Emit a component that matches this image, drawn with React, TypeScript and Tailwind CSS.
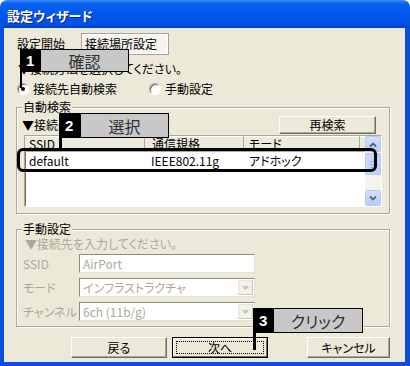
import React from 'react'

function Radio({ checked }: { checked?: boolean }) {
  return (
    <span className="w-[12px] h-[12px] rounded-full bg-white border border-[#ACA899] border-r-white border-b-white shadow-[inset_1px_1px_0_#716F64,1px_1px_0_#F1EFE2] flex items-center justify-center">
      {checked ? <span className="w-[4px] h-[4px] rounded-full bg-black" /> : null}
    </span>
  )
}

function Chevron({ up }: { up?: boolean }) {
  return (
    <svg width="8" height="5" viewBox="0 0 8 5">
      <path d={up ? 'M1 4.5 L4 1.5 L7 4.5' : 'M1 0.5 L4 3.5 L7 0.5'} fill="none" stroke="#4D6185" strokeWidth="1.8" />
    </svg>
  )
}

function Combo({ label, value }: { label: string; value: string }) {
  return (
    <div className="flex items-center h-[19px] mt-[5px]">
      <span className="w-[62px] pl-[6px] text-[#ACA899]">{label}</span>
      <div className="w-[176px] h-full bg-white border border-[#8D8B7F] border-r-[#E4E2D6] border-b-[#E4E2D6] flex items-center">
        <span className="flex-1 pl-[3px] text-[#ACA899]">{value}</span>
        <span className="w-[15px] h-[15px] mr-[1px] bg-[#F2F1EA] border border-[#E6E4D9] border-r-[#C9C7BA] border-b-[#C9C7BA] flex items-center justify-center">
          <svg width="7" height="4" viewBox="0 0 7 4">
            <path d="M0 0 L7 0 L3.5 4 Z" fill="#C4C2B8" />
          </svg>
        </span>
      </div>
    </div>
  )
}

export default function App() {
  return (
    <div className="relative w-[410px] h-[366px] flex flex-col bg-white font-['Noto_Sans_CJK_JP',sans-serif] text-[12px] leading-[14px] text-black [font-feature-settings:'palt']">
      {/* title bar */}
      <div className="h-[28px] shrink-0 rounded-t-[7px] bg-[linear-gradient(180deg,#3D8EF7_0%,#0A62EF_12%,#0058EE_45%,#0052E6_85%,#003FC6_100%)] flex items-center pl-[7px] pt-[3px] text-white font-bold text-[13px] [text-shadow:1px_1px_0_#0A1E8A]">
        設定ウィザード
      </div>

      <div className="flex-1 flex flex-col bg-[#ECE9D8] border-l-4 border-r-[5px] border-b-4 border-[#0B4DE0]">
        {/* steps */}
        <div className="mt-[5px] h-[22px] flex">
          <div className="w-[77px] pl-[13px] flex items-center">設定開始</div>
          <div className="w-[88px] border border-[#A5A39A] bg-white p-[1px]">
            <div className="h-full bg-[#F4F3EE] pl-[2px] flex items-center">接続場所設定</div>
          </div>
        </div>

        <div className="mt-[7px] h-[14px] pl-[14px]">▼接続方法を選択してください。</div>

        <div className="mt-[6px] h-[14px] flex items-center">
          <span className="ml-[13px]"><Radio checked /></span>
          <span className="ml-[4px] w-[104px]">接続先自動検索</span>
          <span className="ml-[12px]"><Radio /></span>
          <span className="ml-[4px]">手動設定</span>
        </div>

        {/* auto search group */}
        <div className="relative mt-[11px] ml-[12px] w-[374px] h-[107px] border border-[#ACA899] shadow-[inset_1px_1px_0_#fff,1px_1px_0_#fff] flex flex-col">
          <span className="absolute -top-[8px] left-[5px] px-[1px] bg-[#ECE9D8]">自動検索</span>
          <div className="mt-[7px] h-[19px] flex items-center justify-between">
            <span className="pl-[5px]">▼接続先を選択します。</span>
            <div className="mr-[13px] w-[97px] h-[18px] bg-[#ECE9D8] border border-white border-r-[#716F64] border-b-[#716F64] shadow-[inset_-1px_-1px_0_#ACA899] flex items-center justify-center">
              再検索
            </div>
          </div>
          <div className="ml-[7px] mt-[1px] w-[358px] h-[72px] bg-white border border-[#ACA899] border-r-white border-b-white shadow-[inset_1px_1px_0_#716F64] flex">
            <div className="flex-1 flex flex-col">
              <div className="h-[16px] flex bg-[#EBEADB] border-b border-[#ACA899] shadow-[inset_0_1px_0_#fff]">
                <div className="w-[120px] pl-[4px] border-r border-[#ACA899] flex items-center">SSID</div>
                <div className="w-[99px] pl-[7px] border-r border-[#ACA899] flex items-center">通信規格</div>
                <div className="w-[116px] pl-[5px] border-r border-[#ACA899] flex items-center">モード</div>
              </div>
              <div className="h-[17px] flex items-center">
                <span className="w-[120px] pl-[4px]">default</span>
                <span className="w-[99px] pl-[6px]">IEEE802.11g</span>
                <span className="pl-[5px]">アドホック</span>
              </div>
            </div>
            <div className="w-[16px] flex flex-col bg-[#F4F3EE]">
              <div className="h-[16px] rounded-[2px] border border-[#B7C9F5] bg-[linear-gradient(180deg,#D4E1FD,#B6CBF8)] flex items-center justify-center">
                <Chevron up />
              </div>
              <div className="mt-[1px] h-[22px] rounded-[2px] border border-[#B7C9F5] bg-[linear-gradient(90deg,#CDDCFC,#B8CDF9)] flex flex-col items-center justify-center gap-[2px]">
                <span className="w-[6px] h-[1px] bg-[#8CB0F8]" />
                <span className="w-[6px] h-[1px] bg-[#8CB0F8]" />
                <span className="w-[6px] h-[1px] bg-[#8CB0F8]" />
              </div>
              <div className="flex-1" />
              <div className="h-[16px] rounded-[2px] border border-[#B7C9F5] bg-[linear-gradient(180deg,#D4E1FD,#B6CBF8)] flex items-center justify-center">
                <Chevron />
              </div>
            </div>
          </div>
        </div>

        {/* manual group */}
        <div className="relative mt-[15px] ml-[12px] w-[374px] h-[98px] border border-[#ACA899] shadow-[inset_1px_1px_0_#fff,1px_1px_0_#fff] flex flex-col">
          <span className="absolute -top-[8px] left-[5px] px-[1px] bg-[#ECE9D8]">手動設定</span>
          <div className="mt-[7px] h-[14px] pl-[8px] text-[#ACA899]">▼接続先を入力してください。</div>
          <div className="flex items-center h-[19px] mt-[3px]">
            <span className="w-[62px] pl-[6px] text-[#ACA899]">SSID</span>
            <div className="w-[176px] h-full bg-white border border-[#8D8B7F] border-r-[#E4E2D6] border-b-[#E4E2D6] flex items-center pl-[3px] text-[#ACA899]">
              AirPort
            </div>
          </div>
          <Combo label="モード" value="インフラストラクチャ" />
          <Combo label="チャンネル" value="6ch (11b/g)" />
        </div>

        {/* buttons */}
        <div className="mt-[10px] h-[21px] flex">
          <div className="ml-[67px] w-[96px] h-full bg-[#ECE9D8] border border-white border-r-[#716F64] border-b-[#716F64] shadow-[inset_-1px_-1px_0_#ACA899] flex items-center justify-center">
            戻る
          </div>
          <div className="ml-[5px] w-[96px] h-full border border-black">
            <div className="h-full border border-white border-r-[#716F64] border-b-[#716F64] p-[2px]">
              <div className="h-full border border-dotted border-black flex items-center justify-center">次へ</div>
            </div>
          </div>
          <div className="ml-[39px] w-[83px] h-full bg-[#ECE9D8] border border-white border-r-[#716F64] border-b-[#716F64] shadow-[inset_-1px_-1px_0_#ACA899] flex items-center justify-center">
            キャンセル
          </div>
        </div>
      </div>

      {/* highlight around selected row */}
      <div className="absolute left-[17px] top-[148px] w-[360px] h-[24px] border-[3px] border-black rounded-[6px]" />

      {/* callout 1 */}
      <div className="absolute left-[20px] top-[49px] h-[23px] flex">
        <div className="w-[20px] bg-black text-white font-bold text-[15px] font-['Liberation_Sans',sans-serif] pl-[6px] flex items-center">1</div>
        <div className="w-[89px] bg-[#C8C8C8] border border-black flex items-center justify-center text-[16px] text-[#303030]">確認</div>
      </div>
      <div className="absolute left-[20px] top-[72px] w-[2px] h-[16px] bg-black" />

      {/* callout 2 */}
      <div className="absolute left-[59px] top-[113px] h-[25px] flex">
        <div className="w-[21px] bg-black text-white font-bold text-[15px] font-['Liberation_Sans',sans-serif] pl-[6px] flex items-center">2</div>
        <div className="w-[89px] bg-[#C8C8C8] border border-black flex items-center justify-center text-[16px] text-[#303030]">選択</div>
      </div>
      <div className="absolute left-[59px] top-[138px] w-[3px] h-[12px] bg-black" />

      {/* callout 3 */}
      <div className="absolute left-[253px] top-[308px] h-[25px] flex">
        <div className="w-[20px] bg-black text-white font-bold text-[15px] font-['Liberation_Sans',sans-serif] pl-[6px] flex items-center">3</div>
        <div className="w-[90px] bg-[#C8C8C8] border border-black flex items-center justify-center text-[16px] text-[#303030]">クリック</div>
      </div>
      <div className="absolute left-[253px] top-[333px] w-[3px] h-[17px] bg-black" />
    </div>
  )
}
